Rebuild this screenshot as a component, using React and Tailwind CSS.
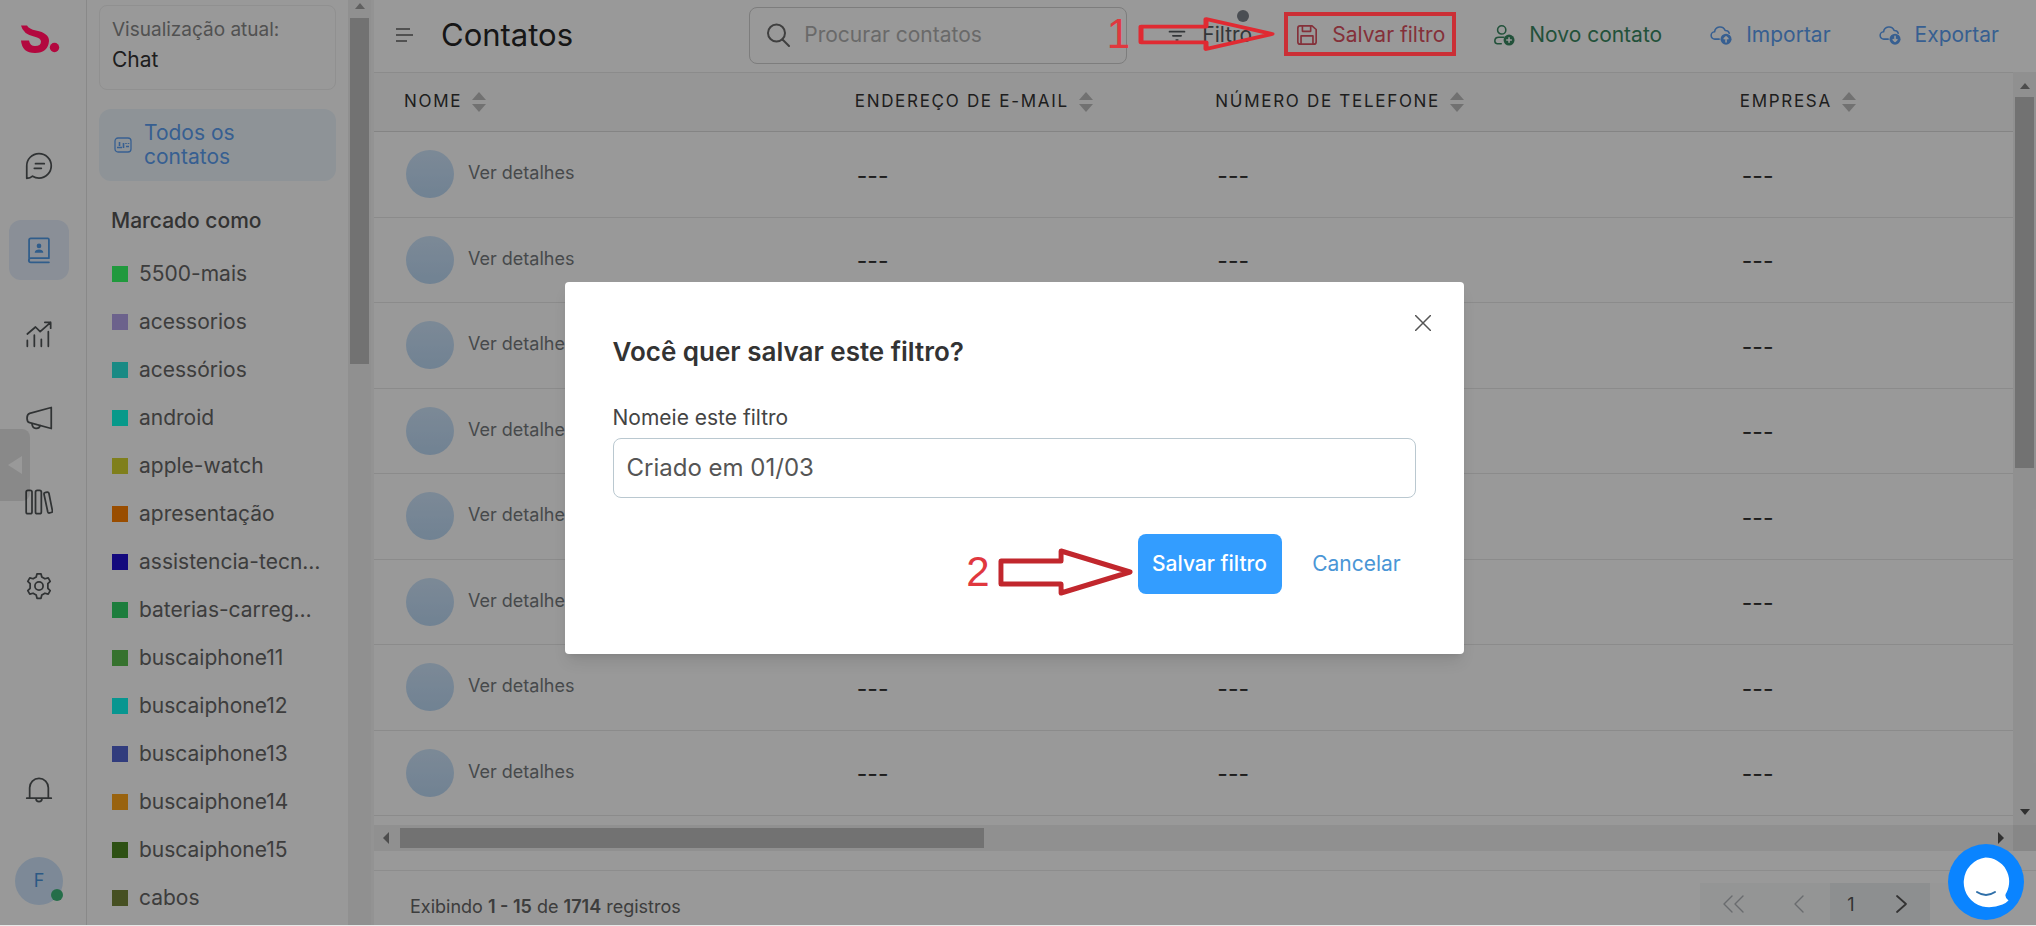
const TAGS = [
  { name: '5500-mais', color: 'bg-[#36ff66]' },
  { name: 'acessorios', color: 'bg-[#b5a3ea]' },
  { name: 'acessórios', color: 'bg-[#2be6dc]' },
  { name: 'android', color: 'bg-[#0dffe6]' },
  { name: 'apple-watch', color: 'bg-[#d4d42f]' },
  { name: 'apresentação', color: 'bg-[#ff8000]' },
  { name: 'assistencia-tecnica', color: 'bg-[#2010d0]' },
  { name: 'baterias-carregadores', color: 'bg-[#2fd067]' },
  { name: 'buscaiphone11', color: 'bg-[#5abf4d]' },
  { name: 'buscaiphone12', color: 'bg-[#0dfaf1]' },
  { name: 'buscaiphone13', color: 'bg-[#5364d0]' },
  { name: 'buscaiphone14', color: 'bg-[#ffa619]' },
  { name: 'buscaiphone15', color: 'bg-[#4b8521]' },
  { name: 'cabos', color: 'bg-[#75853a]' },
]

const COLUMNS = [
  { label: 'Nome', width: 'w-[27.5%]' },
  { label: 'Endereço de e-mail', width: 'w-[22%]' },
  { label: 'Número de telefone', width: 'w-[32%]' },
  { label: 'Empresa', width: 'w-[18.5%]' },
]

const ROWS = [1, 2, 3, 4, 5, 6, 7, 8]

function Icon({ className = 'size-7', width = 1.5, children }) {
  return (
    <svg
      viewBox="0 0 24 24"
      className={className}
      fill="none"
      stroke="currentColor"
      strokeWidth={width}
      strokeLinecap="round"
      strokeLinejoin="round"
      aria-hidden="true"
    >
      {children}
    </svg>
  )
}

function ChatIcon() {
  return (
    <Icon>
      <path d="M1.500 22.500V12A10.500 10.500 0 1 1 12 22.300q-3 0-5.500-1.600-2 1.800-5 1.800z" />
      <path d="M9 10h7.500M8 14h6" />
    </Icon>
  )
}

function ContactsIcon() {
  return (
    <Icon>
      <path d="M3.500 21V3.500A1.500 1.500 0 0 1 5 2h14.500a1 1 0 0 1 1 1v16H5a1.700 1.700 0 0 0 0 3.500h15.500" />
      <circle cx="12" cy="8.500" r="2" fill="currentColor" stroke="none" />
      <path d="M8.300 14.300c0-3.500 7.400-3.500 7.400 0z" fill="currentColor" stroke="none" />
    </Icon>
  )
}

function ChartIcon() {
  return (
    <Icon>
      <path d="M2 22.500v-5M8 22.500V13M14 22.500v-6M20 22.500V10" />
      <path d="M2 12l7-6 4 4 9-8M17 2h5v5" />
    </Icon>
  )
}

function MegaphoneIcon() {
  return (
    <Icon>
      <path d="M22.500 3v18L4 16c-3-.700-3-7 0-8z" />
      <path d="M6 17c.500 5 6 5 7 1.500" />
    </Icon>
  )
}

function BooksIcon() {
  return (
    <Icon>
      <rect x="1" y="2" width="5" height="20" rx="1.500" />
      <rect x="9" y="2" width="5" height="20" rx="1.500" />
      <path d="M17 4l2-.500q1.200-.200 1.500 1l3 15q.200 1.200-1 1.500l-1.500.400q-1.200.200-1.500-1l-3.200-15q-.200-1.200.700-1.400z" />
    </Icon>
  )
}

function GearIcon() {
  return (
    <Icon>
      <circle cx="12" cy="12" r="3.500" />
      <path d="M9.600 4.300 10.300 1.500h3.400l.700 2.800 2.700 1.500 2.800-.800 1.700 3-2 2v4l2 2-1.700 3-2.800-.800-2.700 1.500-.700 2.800h-3.400l-.700-2.800-2.700-1.500-2.800.800-1.700-3 2-2v-4l-2-2 1.700-3 2.800.800z" />
    </Icon>
  )
}

function BellIcon() {
  return (
    <Icon>
      <path d="M1.500 19h21M4 19V10a8 8 0 0 1 16 0v9M9.500 19.500a2.500 2.500 0 0 0 5 0" />
    </Icon>
  )
}

function CloudIcon({ up }) {
  return (
    <Icon className="size-[22px]" width={1.7}>
      <path d="M10 16.500H5.500a4 4 0 0 1-.500-8 6 6 0 0 1 11.500-1.500 4.500 4.500 0 0 1 4.500 3" />
      <circle cx="17.500" cy="16.500" r="6" fill="currentColor" stroke="none" />
      <path className="text-white" d={up ? 'M17.500 19.500v-5.500m-2 2 2-2 2 2' : 'M17.500 13.500v5.500m-2-2 2 2 2-2'} />
    </Icon>
  )
}

function SortIcon() {
  return (
    <svg viewBox="0 0 14 22" className="h-[22px] w-[14px] text-[#bdbdbd]" fill="currentColor" aria-hidden="true">
      <path d="M7 1l7 8H0zM7 21l7-8H0z" />
    </svg>
  )
}

function Rail() {
  const item = 'flex h-[60px] w-[60px] items-center justify-center rounded-xl'
  return (
    <nav className="flex w-[87px] shrink-0 flex-col border-r border-[#e4e4e4] px-[9px] text-[#515557]" aria-label="Principal">
      <a href="#inicio" className="relative z-20 mt-6 ml-3 w-[39px]" aria-label="Início">
        <svg viewBox="0 0 39 30" className="h-[30px] w-[39px]" fill="#b3083f" aria-hidden="true">
          <path d="M0 1.500H6Q8 5 15 6.500 28 9 28 17 27 29 14 29 1 29 0 16.500H8Q9 22 14 22 20 22 20 17.500 20 14 13 12.500 2 10 0 1.500z" />
          <circle cx="33.500" cy="23.500" r="4.700" />
        </svg>
      </a>
      <div className="mt-[82px] flex flex-col gap-6">
        <a href="#chat" className={item} aria-label="Chat"><ChatIcon /></a>
        <a href="#contatos" className={item + ' bg-[#e6effc] text-[#519be8]'} aria-label="Contatos"><ContactsIcon /></a>
        <a href="#relatorios" className={item} aria-label="Relatórios"><ChartIcon /></a>
        <a href="#campanhas" className={item} aria-label="Campanhas"><MegaphoneIcon /></a>
        <a href="#biblioteca" className={item} aria-label="Biblioteca"><BooksIcon /></a>
        <a href="#ajustes" className={item} aria-label="Ajustes"><GearIcon /></a>
      </div>
      <div className="mt-auto mb-[20px] flex flex-col gap-[37px]">
        <button type="button" className={item} aria-label="Notificações"><BellIcon /></button>
        <button type="button" className="relative ml-[6px] size-12 rounded-full bg-[#d0e5fc] text-lg text-[#4a94dc]">
          F
          <span className="absolute right-0 bottom-1 size-3 rounded-full bg-[#3fb87a]" />
        </button>
      </div>
    </nav>
  )
}

function Sidebar() {
  return (
    <aside className="flex w-[287px] shrink-0">
      <div className="flex min-w-0 flex-1 flex-col overflow-hidden px-3">
        <div className="mt-[5px] h-[85px] shrink-0 rounded-lg border border-[#f0f0f0] px-3 pt-2">
          <p className="text-[19px] leading-8 text-[#888]">Visualização atual:</p>
          <p className="text-[21px] leading-7 text-[#333]">Chat</p>
        </div>
        <a href="#todos" className="mt-[19px] flex h-[72px] shrink-0 items-center gap-3 rounded-xl bg-[#edf6fc] pl-[15px] text-[21px] leading-6 text-[#5c9ff2]">
          <svg viewBox="0 0 18 16" className="h-4 w-[18px] shrink-0" fill="none" stroke="currentColor" aria-hidden="true">
            <rect x="1" y="1" width="16" height="14" rx="3" strokeWidth="1.300" />
            <path d="M3 10.500h5M5.500 5v4M9.500 6v5M12 6v1M14.500 6v1M12 9.500h3" strokeWidth="1.600" />
          </svg>
          <span>Todos os<br />contatos</span>
        </a>
        <h2 className="mt-6 px-3 text-[21px] leading-8 font-medium text-[#555]">Marcado como</h2>
        <ul className="mt-[13px]">
          {TAGS.map((tag) => (
            <li key={tag.name} className="flex h-12 items-center gap-[11px] px-[13px]">
              <span className={'size-4 shrink-0 ' + tag.color} />
              <a href={'#' + tag.name} className="truncate text-[21px] leading-8 text-[#666]">{tag.name}</a>
            </li>
          ))}
        </ul>
      </div>
      <div className="flex w-[23px] flex-col items-center bg-[#f1f1f1]">
        <svg viewBox="0 0 10 6" className="my-[3px] h-[6px] w-[10px] text-[#a0a0a0]" fill="currentColor" aria-hidden="true"><path d="M5 0l5 6H0z" /></svg>
        <div className="mt-[6px] h-[346px] w-[19px] bg-[#bfbfbf]" />
      </div>
      <div className="w-[3px] bg-[#f6f6f6]" />
    </aside>
  )
}

function TopBar() {
  return (
    <header className="flex h-[72px] shrink-0 items-center pr-[37px] pb-[2px] pl-[22px] text-[21px]">
      <button type="button" aria-label="Menu">
        <svg viewBox="0 0 17 16" className="h-4 w-[17px] text-[#888]" fill="none" stroke="currentColor" strokeWidth="2" aria-hidden="true">
          <path d="M0 2h14M0 8h17M0 14h11" />
        </svg>
      </button>
      <h1 className="ml-[28px] text-[31px] text-[#262626]">Contatos</h1>
      <label className="mr-[40px] ml-auto flex h-[57px] w-[378px] items-center gap-[14px] rounded-lg border border-[#d0d0d0] px-4">
        <Icon className="size-6 shrink-0 text-[#6a6a6a]" width={2}>
          <circle cx="10.500" cy="10" r="8.500" />
          <path d="M16.500 16.500 23 23" />
        </Icon>
        <input type="search" aria-label="Procurar contatos" placeholder="Procurar contatos" className="w-full min-w-0 outline-none placeholder:text-[#b0b0b0]" />
      </label>
      <button type="button" className="relative flex items-center gap-[15px] text-[#555a5e]">
        <Icon className="size-5" width={2}><path d="M3 8h18M7 13h10M11 18h2" /></Icon>
        Filtro
        <span className="absolute -top-[9px] right-[3px] size-3 rounded-full bg-[#7c828a]" />
      </button>
      <button type="button" className="ml-11 flex items-center gap-[14px] text-[#dc5060]">
        <Icon className="size-[22px]" width={1.8}>
          <path d="M5 2h12.500L22 6v13.500a2.500 2.500 0 0 1-2.500 2.500h-15A2.500 2.500 0 0 1 2 19.500V4.500A2.500 2.500 0 0 1 4.500 2zM7 2v6h9V2M5.500 22v-9h13v9" />
        </Icon>
        Salvar filtro
      </button>
      <button type="button" className="ml-12 flex items-center gap-[14px] text-[#3a8862]">
        <Icon className="size-[22px]" width={1.7}>
          <circle cx="9.500" cy="6.500" r="4.500" />
          <path d="M9 21.500H4.500a3 3 0 0 1-2.500-3c0-2.500 2-4 4.500-4h5" />
          <circle cx="17.500" cy="17.500" r="6" fill="currentColor" stroke="none" />
          <path className="text-white" d="M17.500 15v5M15 17.500h5" />
        </Icon>
        Novo contato
      </button>
      <button type="button" className="ml-12 flex items-center gap-[14px] text-[#5c9ff2]"><CloudIcon up />Importar</button>
      <button type="button" className="ml-12 flex items-center gap-[14px] text-[#5c9ff2]"><CloudIcon />Exportar</button>
    </header>
  )
}

function ContactsTable() {
  return (
    <div className="flex min-h-0 flex-1">
      <div className="flex min-w-0 flex-1 flex-col">
        <div className="min-h-0 flex-1 overflow-hidden border-t border-[#e8e8e8]">
          <table className="w-full table-fixed text-left">
            <thead>
              <tr className="h-[58px] border-b border-[#dcdcdc] bg-[#fafafa]">
                {COLUMNS.map((col) => (
                  <th key={col.label} className={'pl-[30px] font-normal ' + col.width}>
                    <span className="flex items-center gap-[10px] text-[17px] tracking-widest text-[#333] uppercase">
                      {col.label}
                      <SortIcon />
                    </span>
                  </th>
                ))}
              </tr>
            </thead>
            <tbody>
              {ROWS.map((row) => (
                <tr key={row} className="border-b border-[#e8e8e8] odd:h-[86px] even:h-[85px]">
                  <td className="pl-8">
                    <div className="flex items-center gap-[14px]">
                      <span className="size-12 rounded-full bg-linear-to-b from-[#cfe5fb] to-[#bcd9f5]" />
                      <a href={'#contato-' + row} className="pb-[3px] text-[18px] text-[#767b7e]">Ver detalhes</a>
                    </div>
                  </td>
                  <td className="pt-1 pl-8 text-[23px] text-[#333]">---</td>
                  <td className="pt-1 pl-8 text-[23px] text-[#333]">---</td>
                  <td className="pt-1 pl-8 text-[23px] text-[#333]">---</td>
                </tr>
              ))}
            </tbody>
          </table>
        </div>
        <div className="flex h-[26px] shrink-0 items-center bg-[#f1f1f1] px-[9px]">
          <svg viewBox="0 0 6 12" className="h-3 w-[6px] text-[#808080]" fill="currentColor" aria-hidden="true"><path d="M6 0v12L0 6z" /></svg>
          <div className="ml-[11px] h-5 w-[36%] bg-[#bfbfbf]" />
          <svg viewBox="0 0 6 12" className="ml-auto h-3 w-[6px] text-[#505050]" fill="currentColor" aria-hidden="true"><path d="M0 0v12l6-6z" /></svg>
        </div>
      </div>
      <div className="flex w-[23px] shrink-0 flex-col items-center bg-[#f1f1f1]">
        <svg viewBox="0 0 10 6" className="mt-[11px] h-[6px] w-[10px] text-[#808080]" fill="currentColor" aria-hidden="true"><path d="M5 0l5 6H0z" /></svg>
        <div className="mt-2 h-[371px] w-[19px] bg-[#bfbfbf]" />
        <svg viewBox="0 0 10 6" className="mt-auto mb-[10px] h-[6px] w-[10px] text-[#505050]" fill="currentColor" aria-hidden="true"><path d="M0 0h10L5 6z" /></svg>
        <div className="h-[26px] w-full bg-[#e2e2e2]" />
      </div>
    </div>
  )
}

function Pagination() {
  const cell = 'flex h-[42px] items-center justify-center'
  return (
    <footer className="mt-[19px] flex h-[55px] shrink-0 items-end justify-between border-t border-[#ececec] pr-[26px] pl-9 text-[#666]">
      <p className="h-9 text-[18px] leading-9">
        Exibindo <b className="font-semibold">1 - 15</b> de <b className="font-semibold">1714</b> registros
      </p>
      <div className="flex">
        <button type="button" className={cell + ' w-[66px] bg-[#f7f8f9] text-[#b0b4b8]'} aria-label="Primeira página">
          <Icon className="h-6 w-7" width={1.4}><path d="M11 4 3 12l8 8M22 4l-8 8 8 8" /></Icon>
        </button>
        <button type="button" className={cell + ' w-[64px] bg-[#f7f8f9] text-[#b0b4b8]'} aria-label="Página anterior">
          <Icon className="size-6" width={1.4}><path d="M17 4 9 12l8 8" /></Icon>
        </button>
        <button type="button" className={cell + ' w-[42px] bg-[#eceef0] text-[18px] text-[#555]'}>1</button>
        <button type="button" className={cell + ' w-[58px] bg-[#eceef0] text-[#555]'} aria-label="Próxima página">
          <Icon className="size-6" width={1.8}><path d="m8 4 9 8-9 8" /></Icon>
        </button>
        <button type="button" className={cell + ' w-[80px] bg-[#fcfcfc] pl-3 text-[#b0b4b8]'} aria-label="Última página">
          <Icon className="h-6 w-7" width={1.4}><path d="m2 4 8 8-8 8M13 4l8 8-8 8" /></Icon>
        </button>
      </div>
    </footer>
  )
}

function Arrow({ className, points }) {
  return (
    <svg viewBox="0 0 138 48" preserveAspectRatio="none" className={className} fill="none" stroke="currentColor" strokeWidth="5" strokeLinejoin="round" aria-hidden="true">
      <polygon points={points} />
    </svg>
  )
}

function SaveFilterDialog() {
  return (
    <div role="dialog" aria-modal="true" aria-labelledby="dialog-title" className="relative mt-[10px] h-[372px] w-[899px] rounded-sm bg-white px-12 pt-[52px] text-[#333] shadow-lg">
      <button type="button" className="absolute top-[33px] right-[33px]" aria-label="Fechar">
        <svg viewBox="0 0 16 16" className="size-4 text-[#555]" stroke="currentColor" strokeWidth="1.500" aria-hidden="true">
          <path d="M0 0l16 16M16 0L0 16" />
        </svg>
      </button>
      <h2 id="dialog-title" className="text-[26px] leading-9 font-semibold">Você quer salvar este filtro?</h2>
      <label htmlFor="filter-name" className="mt-8 mb-1 block text-[21px] leading-8 text-[#444]">Nomeie este filtro</label>
      <input id="filter-name" type="text" defaultValue="Criado em 01/03" className="block h-[60px] w-full rounded-lg border border-[#bac8d0] px-[13px] text-[24px] text-[#555] outline-none" />
      <div className="mt-[34px] flex items-center justify-end gap-4 text-[21px]">
        <span className="mt-4 mr-[-12px] flex items-center gap-2 text-[#c1272d]">
          <span className="font-['Liberation_Sans'] text-[42px] leading-none text-[#e0383e]">2</span>
          <Arrow className="h-12 w-[136px]" points="3,13 64,13 64,3 134,24 64,45 64,36 3,36" />
        </span>
        <button type="button" className="h-[60px] w-[144px] rounded-lg bg-[#339dff] font-medium text-white">Salvar filtro</button>
        <button type="button" className="h-[60px] w-[118px] text-[#4a96d6]">Cancelar</button>
      </div>
    </div>
  )
}

export default function App() {
  return (
    <div className="relative flex h-screen overflow-hidden border-b border-[#e8e8e8] bg-white font-['Inter',sans-serif]">
      <Rail />
      <Sidebar />
      <main className="flex min-w-0 flex-1 flex-col">
        <TopBar />
        <ContactsTable />
        <Pagination />
      </main>

      {/* Drawer handle on the left edge */}
      <button type="button" className="absolute top-[429px] left-0 flex h-[72px] w-[30px] items-center justify-center rounded-r-lg bg-black/10" aria-label="Recolher">
        <svg viewBox="0 0 14 18" className="h-[18px] w-[14px] text-white" fill="currentColor" aria-hidden="true"><path d="M14 0v18L0 9z" /></svg>
      </button>

      {/* Backdrop and dialog */}
      <div className="absolute inset-0 z-10 flex items-center justify-center bg-black/40 pr-2">
        <SaveFilterDialog />
      </div>

      {/* Step 1 marker */}
      <div className="absolute top-3 right-[580px] z-20 flex h-11 items-center text-[#e02a32]">
        <span className="mr-2 font-['Liberation_Sans'] text-[42px] leading-none text-[#e0383e]">1</span>
        <Arrow className="h-9 w-[138px]" points="3,14 68,14 68,4 134,24 68,44 68,35 3,35" />
        <span className="ml-2 h-11 w-[172px] border-4 border-[#cb2f36]" />
      </div>

      {/* Messenger launcher */}
      <button type="button" className="absolute right-3 bottom-[5px] z-20 size-[76px] rounded-full bg-[#0a84ff]" aria-label="Abrir chat">
        <svg viewBox="0 0 76 76" className="size-full" aria-hidden="true">
          <path d="M37.500 13.500a24 24 0 0 1 21 35q-3 4 2 8-3 3-6 4-10 4-20 2a25 25 0 0 1 3-49z" fill="#fff" />
          <path d="M29 48q9 6 18 0" fill="none" stroke="#2f6fa8" strokeWidth="2" strokeLinecap="round" />
        </svg>
      </button>
    </div>
  )
}
